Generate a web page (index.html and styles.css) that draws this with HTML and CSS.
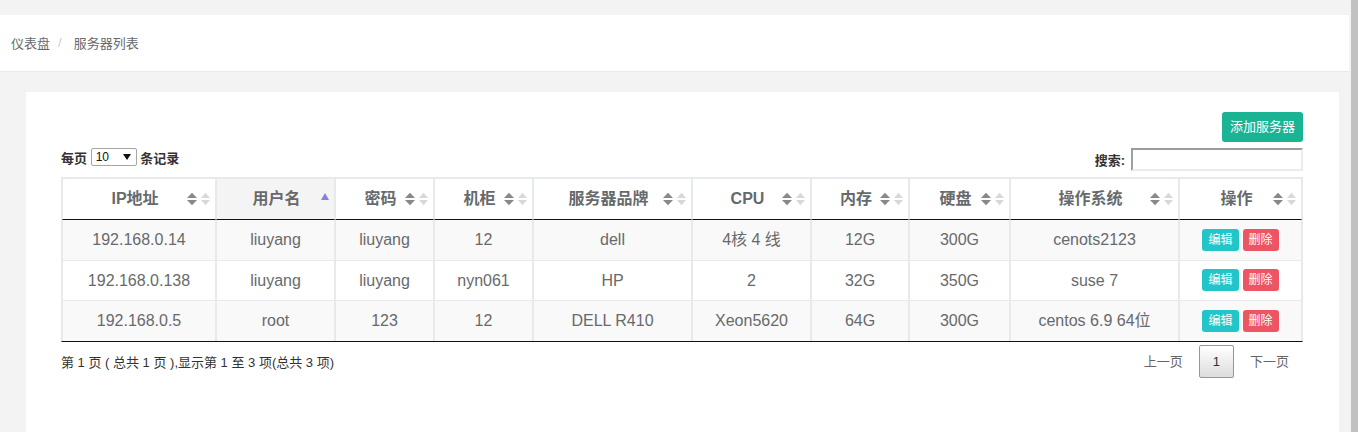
FILE: index.html
```html
<!DOCTYPE html>
<html lang="zh-CN">
<head>
<meta charset="utf-8">
<title>服务器列表</title>
<link rel="stylesheet" href="styles.css">
</head>
<body>
<div class="layout">
  <div class="main">
    <div class="topbar">
      <nav class="breadcrumb"><span>仪表盘</span><span class="sep">/</span><span>服务器列表</span></nav>
    </div>
    <div class="content">
      <div class="card">
        <div class="toolbar"><button class="btn-add">添加服务器</button></div>
        <div class="controls">
          <label class="length">每页 <span class="select"><span>10</span><svg class="caret" width="8" height="6" viewBox="0 0 8 6"><polygon points="0,0 8,0 4,6" fill="#111"/></svg></span> 条记录</label>
          <label class="search">搜索:<input type="search"></label>
        </div>
        <table class="grid">
          <thead>
            <tr>
              <th class="w1">IP地址<svg class="sort" width="24" height="14" viewBox="0 0 24 14"><polygon points="0,6 5,0.8 10,6" fill="#888"/><polygon points="0,8 5,13.2 10,8" fill="#888"/><polygon points="14,6 18.5,0.8 23,6" fill="#d8d8d8"/><polygon points="14,8 18.5,13.2 23,8" fill="#d8d8d8"/></svg></th>
              <th class="w2 sorted">用户名<svg class="asc" width="8" height="7" viewBox="0 0 8 7"><polygon points="0,7 4,0 8,7" fill="#7f82e0"/></svg></th>
              <th class="w3">密码<svg class="sort" width="24" height="14" viewBox="0 0 24 14"><polygon points="0,6 5,0.8 10,6" fill="#888"/><polygon points="0,8 5,13.2 10,8" fill="#888"/><polygon points="14,6 18.5,0.8 23,6" fill="#d8d8d8"/><polygon points="14,8 18.5,13.2 23,8" fill="#d8d8d8"/></svg></th>
              <th class="w4">机柜<svg class="sort" width="24" height="14" viewBox="0 0 24 14"><polygon points="0,6 5,0.8 10,6" fill="#888"/><polygon points="0,8 5,13.2 10,8" fill="#888"/><polygon points="14,6 18.5,0.8 23,6" fill="#d8d8d8"/><polygon points="14,8 18.5,13.2 23,8" fill="#d8d8d8"/></svg></th>
              <th class="w5">服务器品牌<svg class="sort" width="24" height="14" viewBox="0 0 24 14"><polygon points="0,6 5,0.8 10,6" fill="#888"/><polygon points="0,8 5,13.2 10,8" fill="#888"/><polygon points="14,6 18.5,0.8 23,6" fill="#d8d8d8"/><polygon points="14,8 18.5,13.2 23,8" fill="#d8d8d8"/></svg></th>
              <th class="w6">CPU<svg class="sort" width="24" height="14" viewBox="0 0 24 14"><polygon points="0,6 5,0.8 10,6" fill="#888"/><polygon points="0,8 5,13.2 10,8" fill="#888"/><polygon points="14,6 18.5,0.8 23,6" fill="#d8d8d8"/><polygon points="14,8 18.5,13.2 23,8" fill="#d8d8d8"/></svg></th>
              <th class="w7">内存<svg class="sort" width="24" height="14" viewBox="0 0 24 14"><polygon points="0,6 5,0.8 10,6" fill="#888"/><polygon points="0,8 5,13.2 10,8" fill="#888"/><polygon points="14,6 18.5,0.8 23,6" fill="#d8d8d8"/><polygon points="14,8 18.5,13.2 23,8" fill="#d8d8d8"/></svg></th>
              <th class="w8">硬盘<svg class="sort" width="24" height="14" viewBox="0 0 24 14"><polygon points="0,6 5,0.8 10,6" fill="#888"/><polygon points="0,8 5,13.2 10,8" fill="#888"/><polygon points="14,6 18.5,0.8 23,6" fill="#d8d8d8"/><polygon points="14,8 18.5,13.2 23,8" fill="#d8d8d8"/></svg></th>
              <th class="w9">操作系统<svg class="sort" width="24" height="14" viewBox="0 0 24 14"><polygon points="0,6 5,0.8 10,6" fill="#888"/><polygon points="0,8 5,13.2 10,8" fill="#888"/><polygon points="14,6 18.5,0.8 23,6" fill="#d8d8d8"/><polygon points="14,8 18.5,13.2 23,8" fill="#d8d8d8"/></svg></th>
              <th class="w10">操作<svg class="sort" width="24" height="14" viewBox="0 0 24 14"><polygon points="0,6 5,0.8 10,6" fill="#888"/><polygon points="0,8 5,13.2 10,8" fill="#888"/><polygon points="14,6 18.5,0.8 23,6" fill="#d8d8d8"/><polygon points="14,8 18.5,13.2 23,8" fill="#d8d8d8"/></svg></th>
            </tr>
          </thead>
          <tbody>
            <tr class="odd">
              <td>192.168.0.14</td><td>liuyang</td><td>liuyang</td><td>12</td><td>dell</td><td>4核 4 线</td><td>12G</td><td>300G</td><td>cenots2123</td>
              <td><div class="ops"><button class="btn-edit">编辑</button><button class="btn-del">删除</button></div></td>
            </tr>
            <tr class="even">
              <td>192.168.0.138</td><td>liuyang</td><td>liuyang</td><td>nyn061</td><td>HP</td><td>2</td><td>32G</td><td>350G</td><td>suse 7</td>
              <td><div class="ops"><button class="btn-edit">编辑</button><button class="btn-del">删除</button></div></td>
            </tr>
            <tr class="odd">
              <td>192.168.0.5</td><td>root</td><td>123</td><td>12</td><td>DELL R410</td><td>Xeon5620</td><td>64G</td><td>300G</td><td>centos 6.9 64位</td>
              <td><div class="ops"><button class="btn-edit">编辑</button><button class="btn-del">删除</button></div></td>
            </tr>
          </tbody>
        </table>
        <div class="footer">
          <div class="info">第 1 页 ( 总共 1 页 ),显示第 1 至 3 项(总共 3 项)</div>
          <div class="pager">
            <span class="pg disabled">上一页</span>
            <span class="pg current">1</span>
            <span class="pg disabled">下一页</span>
          </div>
        </div>
      </div>
    </div>
  </div>
  <div class="scrollbar"></div>
</div>
</body>
</html>
```

FILE: styles.css
```css
* { box-sizing: border-box; }

html, body {
  margin: 0;
  padding: 0;
}

body {
  font-family: "Liberation Sans", "Noto Sans CJK SC", sans-serif;
  font-size: 13px;
  color: #676a6c;
  background: #f3f3f4;
}

.layout {
  display: flex;
  height: 432px;
  overflow: hidden;
}

.main {
  flex: 1;
  padding-top: 15px;
}

.scrollbar {
  width: 7px;
  background: #c1c1c1;
}

.topbar {
  height: 57px;
  margin-right: 2px;
  background: #fff;
  border-bottom: 1px solid #e7eaec;
  display: flex;
  align-items: center;
  padding: 0 0 2px 11px;
}

.breadcrumb {
  display: flex;
  align-items: center;
  font-size: 13px;
  color: #676a6c;
}

.breadcrumb .sep {
  color: #ccc;
  margin: 0 12px 0 8px;
}

.content {
  padding: 20px 12px 0 26px;
}

.card {
  background: #fff;
  height: 400px;
  padding: 20px 36px 0 35px;
}

.toolbar {
  display: flex;
  justify-content: flex-end;
}

.btn-add {
  height: 30px;
  padding: 0 8px;
  border: none;
  border-radius: 3px;
  background: #1ab394;
  color: #fff;
  font-family: inherit;
  font-size: 13px;
  line-height: 30px;
}

.controls {
  display: flex;
  justify-content: space-between;
  align-items: flex-start;
  margin-top: 6px;
}

.length {
  display: flex;
  align-items: center;
  height: 18px;
  font-weight: bold;
  color: #333;
  white-space: pre;
}

.select {
  display: inline-flex;
  align-items: center;
  justify-content: space-between;
  width: 46px;
  height: 18px;
  padding: 0 5px 0 4px;
  border: 1px solid #a6a6a6;
  border-radius: 2px;
  font-weight: normal;
  font-size: 12px;
  color: #111;
  background: #fff;
}

.search {
  display: flex;
  align-items: center;
  font-weight: bold;
  color: #333;
}

.search input {
  width: 172px;
  height: 23px;
  margin: 0 0 0 6px;
  padding: 0 4px;
  border-style: solid;
  border-width: 2px 2px 2px 2px;
  border-color: #9b9b9b #ebebeb #ebebeb #a0a0a0;
  background: #fff;
  outline: none;
}

.grid {
  width: 1242px;
  margin-top: 6px;
  table-layout: fixed;
  border-collapse: separate;
  border-spacing: 0;
  border: 1px solid #e7eaec;
  border-bottom: 1px solid #111;
  font-size: 16px;
}

.grid th {
  position: relative;
  padding: 8px 18px 8px 10px;
  line-height: 24px;
  font-weight: bold;
  text-align: center;
  color: #676a6c;
  border: 1px solid #e7eaec;
  border-bottom: 1px solid #111;
  background: #fff;
}

.grid th.sorted {
  background: #f4f4f4;
  padding-right: 8px;
}

.w1 { width: 154px; }
.w2 { width: 119px; }
.w3 { width: 99px; }
.w4 { width: 99px; }
.w5 { width: 159px; }
.w6 { width: 119px; }
.w7 { width: 98px; }
.w8 { width: 101px; }
.w9 { width: 169px; }
.w10 { width: 123px; }

.sort {
  position: absolute;
  right: 4px;
  top: 50%;
  margin-top: -7px;
}

.asc {
  position: absolute;
  right: 5px;
  top: 14px;
}

.grid td {
  padding: 8px 10px;
  line-height: 23.5px;
  text-align: center;
  color: #676a6c;
  border-left: 1px solid #e7eaec;
  border-right: 1px solid #e7eaec;
  border-top: 1px solid #e7eaec;
  white-space: nowrap;
}

.grid tbody tr:first-child td {
  border-top: none;
}

.grid tr.odd td {
  background: #f9f9f9;
}

.grid tr.even td {
  background: #fff;
}

.ops {
  display: flex;
  justify-content: center;
  align-items: center;
  gap: 4px;
  height: 23.5px;
}

.btn-edit,
.btn-del {
  height: 22px;
  padding: 0 6px;
  border: none;
  border-radius: 3px;
  color: #fff;
  font-family: inherit;
  font-size: 12px;
  line-height: 22px;
}

.btn-edit { background: #23c6c8; }
.btn-del { background: #ed5565; }

.footer {
  display: flex;
  justify-content: space-between;
  align-items: center;
  margin-top: 3px;
}

.info {
  font-size: 13px;
  color: #333;
}

.pager {
  display: flex;
  align-items: center;
}

.pg {
  display: inline-block;
  padding: 7px 13px;
  margin-left: 2px;
  line-height: 17px;
  font-size: 13px;
  border: 1px solid transparent;
  border-radius: 2px;
}

.pg.disabled {
  color: #666;
}

.pg.current {
  color: #333;
  border-color: #979797;
  background: linear-gradient(to bottom, #ffffff 0%, #dcdcdc 100%);
}
```
